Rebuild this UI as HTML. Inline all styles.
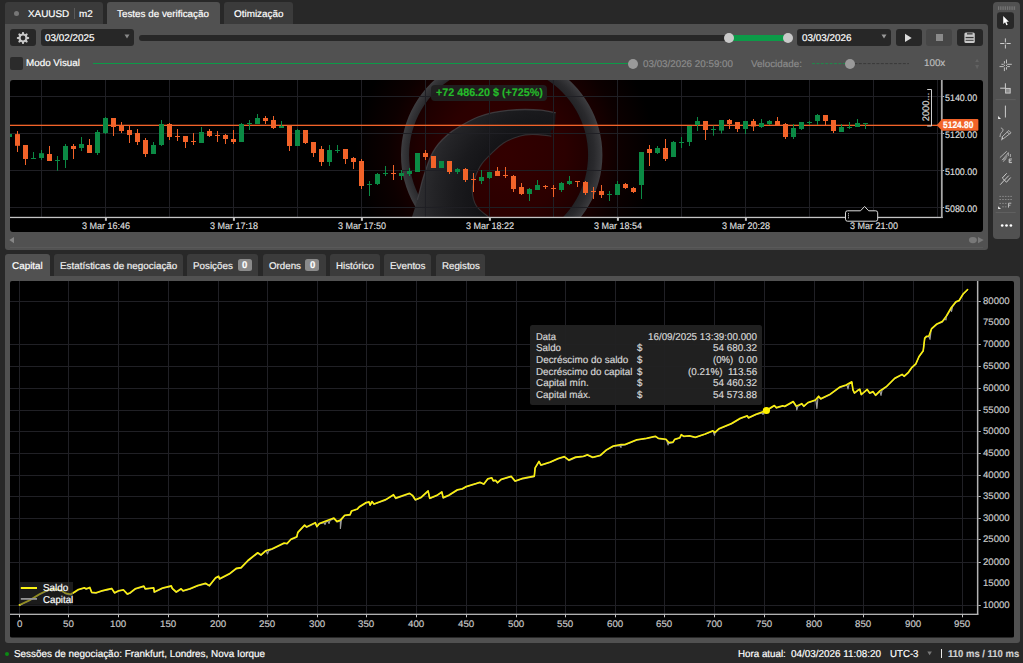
<!DOCTYPE html>
<html><head><meta charset="utf-8"><title>cTrader Backtest</title>
<style>
html,body{margin:0;padding:0;}
body{width:1023px;height:663px;overflow:hidden;background:#282828;font-family:"Liberation Sans",sans-serif;position:relative;}
.b{position:absolute;display:block;}
.t{position:absolute;display:block;white-space:pre;transform-origin:0 50%;text-rendering:geometricPrecision;-webkit-text-stroke:0.18px currentColor;font-family:"Liberation Sans",sans-serif;}
</style></head><body>
<div class="b" style="left:5px;top:2px;width:98px;height:22px;background:#3b3b3b;border-radius:3px 3px 0 0"></div>
<div class="b" style="left:107px;top:2px;width:113px;height:22px;background:#515151;border-radius:3px 3px 0 0"></div>
<div class="b" style="left:224px;top:2px;width:68.5px;height:22px;background:#3b3b3b;border-radius:3px 3px 0 0"></div>
<div class="b" style="left:13.7px;top:10.7px;width:5px;height:5px;background:#777;border-radius:50%"></div>
<span class="t" style="left:27.50px;top:9px;font-size:9.8px;line-height:12.009px;color:#fff;transform:scaleX(1.0106);">XAUUSD</span>
<div class="b" style="left:74.3px;top:8px;width:1px;height:11px;background:#5a5a5a;"></div>
<span class="t" style="left:79.30px;top:9px;font-size:9.8px;line-height:12.009px;color:#fff;transform:scaleX(1.0057);">m2</span>
<span class="t" style="left:116.80px;top:9px;font-size:9.8px;line-height:12.009px;color:#fff;transform:scaleX(1.0051);">Testes de verificação</span>
<span class="t" style="left:234.00px;top:9px;font-size:9.8px;line-height:12.009px;color:#fff;transform:scaleX(1.0102);">Otimização</span>
<div class="b" style="left:5px;top:24px;width:983px;height:225.7px;background:#515151;border-radius:0 3px 3px 3px"></div>
<div class="b" style="left:10px;top:29px;width:26px;height:17px;background:#272727;border-radius:3px"></div>
<div class="b" style="left:41px;top:29px;width:93px;height:17px;background:#272727;border-radius:3px"></div>
<span class="t" style="left:45.00px;top:33px;font-size:9.8px;line-height:12.009px;color:#fff;transform:scaleX(1.0092);">03/02/2025</span>
<svg class="b" style="left:124px;top:34px" width="7" height="6"><path d="M0.5,0.5 L5.5,0.5 L3,4.5Z" fill="#888"/></svg>
<svg class="b" style="left:16px;top:30.6px" width="14" height="14" viewBox="-7 -7 14 14">
<g fill="#c9c9c9"><circle r="4.2"/><path d="M-1.5,-3.6 L-0.7,-6.1 L0.7,-6.1 L1.5,-3.6Z" transform="rotate(0)"/><path d="M-1.5,-3.6 L-0.7,-6.1 L0.7,-6.1 L1.5,-3.6Z" transform="rotate(45)"/><path d="M-1.5,-3.6 L-0.7,-6.1 L0.7,-6.1 L1.5,-3.6Z" transform="rotate(90)"/><path d="M-1.5,-3.6 L-0.7,-6.1 L0.7,-6.1 L1.5,-3.6Z" transform="rotate(135)"/><path d="M-1.5,-3.6 L-0.7,-6.1 L0.7,-6.1 L1.5,-3.6Z" transform="rotate(180)"/><path d="M-1.5,-3.6 L-0.7,-6.1 L0.7,-6.1 L1.5,-3.6Z" transform="rotate(225)"/><path d="M-1.5,-3.6 L-0.7,-6.1 L0.7,-6.1 L1.5,-3.6Z" transform="rotate(270)"/><path d="M-1.5,-3.6 L-0.7,-6.1 L0.7,-6.1 L1.5,-3.6Z" transform="rotate(315)"/></g><circle r="2.4" fill="#272727"/></svg>
<div class="b" style="left:139px;top:35px;width:650px;height:6px;background:#272727;border-radius:3px"></div>
<div class="b" style="left:729px;top:35px;width:59px;height:6px;background:#0c9a48;"></div>
<div class="b" style="left:723.7px;top:32.7px;width:10px;height:10px;background:#c9c9c9;border-radius:50%"></div>
<div class="b" style="left:782.8px;top:32.7px;width:10px;height:10px;background:#c9c9c9;border-radius:50%"></div>
<div class="b" style="left:797px;top:29px;width:94px;height:17px;background:#272727;border-radius:3px"></div>
<span class="t" style="left:802.00px;top:33px;font-size:9.8px;line-height:12.009px;color:#fff;transform:scaleX(1.0092);">03/03/2026</span>
<svg class="b" style="left:881px;top:34px" width="7" height="6"><path d="M0.5,0.5 L5.5,0.5 L3,4.5Z" fill="#999"/></svg>
<div class="b" style="left:896px;top:29px;width:26px;height:17px;background:#272727;border-radius:3px"></div>
<svg class="b" style="left:904px;top:32.5px" width="10" height="10"><path d="M1,0.7 L7.7,4.9 L1,9.1Z" fill="#ddd"/></svg>
<div class="b" style="left:926px;top:29px;width:26px;height:17px;background:#464646;border-radius:3px"></div>
<div class="b" style="left:936px;top:34px;width:7px;height:7px;background:#8a8a8a;"></div>
<div class="b" style="left:957px;top:29px;width:26px;height:17px;background:#272727;border-radius:3px"></div>
<svg class="b" style="left:964px;top:32px" width="12" height="12"><rect x="0.4" y="0.4" width="10.4" height="10.6" rx="1.5" fill="#c9c9c9"/><rect x="3" y="0.9" width="5.6" height="1.7" fill="#555"/><rect x="1.6" y="4.9" width="8" height="1.3" fill="#3a3a3a"/><rect x="1.6" y="7.8" width="8" height="1.1" fill="#4a4a4a"/></svg>
<div class="b" style="left:10px;top:57px;width:12.5px;height:12.5px;background:#2b2b2b;border-radius:2px"></div>
<span class="t" style="left:25.50px;top:58px;font-size:9.8px;line-height:12.009px;color:#fff;transform:scaleX(1.0046);">Modo Visual</span>
<div class="b" style="left:92.5px;top:63.1px;width:538px;height:1px;background:#0c9a48;"></div>
<div class="b" style="left:628.4px;top:59px;width:10px;height:10px;background:#9a9a9a;border-radius:50%"></div>
<span class="t" style="left:643.00px;top:59px;font-size:9.8px;line-height:12.009px;color:#8c8c8c;transform:scaleX(1.0009);">03/03/2026 20:59:00</span>
<span class="t" style="left:750.80px;top:59px;font-size:9.8px;line-height:12.009px;color:#8c8c8c;transform:scaleX(1.0046);">Velocidade:</span>
<svg class="b" style="left:811px;top:62px" width="99" height="3"><line x1="1" y1="1.6" x2="39" y2="1.6" stroke="#1f8a4c" stroke-width="1" stroke-dasharray="3 1.4"/><line x1="39" y1="1.6" x2="98" y2="1.6" stroke="#3a3a3a" stroke-width="1" stroke-dasharray="3 1.4"/></svg>
<div class="b" style="left:845px;top:58.6px;width:10px;height:10px;background:#9a9a9a;border-radius:50%"></div>
<span class="t" style="left:923.90px;top:58px;font-size:9.8px;line-height:12.009px;color:#bdbdbd;transform:scaleX(1.0016);">100x</span>
<svg class="b" style="left:974px;top:57px" width="7" height="14"><path d="M1.2,5.1 L3.1,1.7 L5,5.1Z M1.2,8 L3.1,12.2 L5,8Z" fill="#626262"/></svg>
<svg class="b" style="left:10px;top:80px;border-radius:3px" width="973.3" height="152" viewBox="10 80 973.3 152"><defs><radialGradient id="glow" cx="505" cy="155" r="150" gradientUnits="userSpaceOnUse">
<stop offset="0" stop-color="#330000"/><stop offset="0.4" stop-color="#2b0000"/><stop offset="0.58" stop-color="#1f0000"/><stop offset="0.78" stop-color="#0c0000"/><stop offset="1" stop-color="#000"/></radialGradient>
<radialGradient id="ring" cx="501.7" cy="155" r="100.7" gradientUnits="userSpaceOnUse"><stop offset="0.84" stop-color="#202023"/><stop offset="0.92" stop-color="#2a2a2d"/><stop offset="0.975" stop-color="#363639"/><stop offset="1" stop-color="#3e3e41"/></radialGradient>
<radialGradient id="sw" cx="545" cy="200" r="130" gradientUnits="userSpaceOnUse"><stop offset="0.5" stop-color="#121215"/><stop offset="0.7" stop-color="#1a1a1d"/><stop offset="0.86" stop-color="#242427"/><stop offset="1" stop-color="#2f2f32"/></radialGradient>
<clipPath id="plot"><rect x="10" y="80" width="932" height="137"/></clipPath></defs><rect x="10" y="80" width="973.3" height="152" fill="#000"/><g clip-path="url(#plot)"><rect x="340" y="80" width="330" height="137" fill="url(#glow)"/><path fill-rule="evenodd" d="M501.7,54.3 a100.7,100.7 0 1 0 0.01,0Z M498.6,65.5 a89.5,89.5 0 1 1 -0.01,0Z" fill="url(#ring)"/><path d="M555.7,112.7 C553.2,112.3 546.1,110.7 541.0,110.2 C535.9,109.7 530.8,109.5 525.3,109.5 C519.8,109.5 513.4,109.8 508.0,110.3 C502.6,110.8 497.7,111.6 492.7,112.7 C487.7,113.8 482.3,115.4 478.0,117.0 C473.7,118.6 471.0,120.1 466.7,122.5 C462.4,124.9 456.0,128.6 452.0,131.4 C448.0,134.2 445.2,136.8 442.5,139.5 C439.8,142.2 437.7,144.7 435.7,147.6 C433.7,150.5 432.2,153.2 430.5,157.1 C428.8,160.9 426.9,166.6 425.5,170.7 C424.1,174.8 423.0,178.4 422.1,181.6 C421.2,184.8 420.9,186.6 420.1,189.7 C419.3,192.8 417.8,198.2 417.4,199.9 L412,217 L488.6,217 C486.6,215.2 479.1,210.3 476.4,206.0 C473.7,201.7 472.5,195.8 472.3,191.0 C472.1,186.2 473.5,182.0 475.1,177.5 C476.7,173.0 478.5,168.4 481.8,163.9 C485.1,159.4 491.1,153.9 494.7,150.4 C498.3,146.9 500.4,145.1 503.6,143.0 C506.8,140.9 510.4,139.3 514.0,138.0 C517.6,136.7 521.3,135.5 525.3,134.9 C529.3,134.3 533.6,134.4 538.0,134.6 C542.4,134.8 549.2,135.9 551.4,136.2 L550.6,131 L554.6,128.6 Z" fill="url(#sw)"/><path d="M555.7,112.7 C553.2,112.3 546.1,110.7 541.0,110.2 C535.9,109.7 530.8,109.5 525.3,109.5 C519.8,109.5 513.4,109.8 508.0,110.3 C502.6,110.8 497.7,111.6 492.7,112.7 C487.7,113.8 482.3,115.4 478.0,117.0 C473.7,118.6 471.0,120.1 466.7,122.5 C462.4,124.9 456.0,128.6 452.0,131.4 C448.0,134.2 445.2,136.8 442.5,139.5 C439.8,142.2 437.7,144.7 435.7,147.6 C433.7,150.5 432.2,153.2 430.5,157.1 C428.8,160.9 426.9,166.6 425.5,170.7 C424.1,174.8 423.0,178.4 422.1,181.6 C421.2,184.8 420.9,186.6 420.1,189.7 C419.3,192.8 417.8,198.2 417.4,199.9" fill="none" stroke="#444447" stroke-width="1.3" opacity="0.8"/><path d="M488.6,217 C486.6,215.2 479.1,210.3 476.4,206.0 C473.7,201.7 472.5,195.8 472.3,191.0 C472.1,186.2 473.5,182.0 475.1,177.5 C476.7,173.0 478.5,168.4 481.8,163.9 C485.1,159.4 491.1,153.9 494.7,150.4 C498.3,146.9 500.4,145.1 503.6,143.0 C506.8,140.9 510.4,139.3 514.0,138.0 C517.6,136.7 521.3,135.5 525.3,134.9 C529.3,134.3 533.6,134.4 538.0,134.6 C542.4,134.8 549.2,135.9 551.4,136.2" fill="none" stroke="#38383b" stroke-width="1.1" opacity="0.8"/></g><path d="M41.5,80V217 M105.5,80V217 M169.5,80V217 M233.5,80V217 M297.5,80V217 M361.5,80V217 M425.5,80V217 M489.5,80V217 M553.5,80V217 M617.5,80V217 M681.5,80V217 M745.5,80V217 M809.5,80V217 M873.5,80V217 M937.5,80V217 M10,96.5H942 M10,133.5H942 M10,170.5H942 M10,207.5H942" stroke="#202025" stroke-width="1" fill="none"/><rect x="10" y="124.7" width="932" height="1.3" fill="#f26329"/><rect x="9.0" y="134" width="1" height="3" fill="#0b8a44"/><rect x="7.0" y="134" width="5" height="3" fill="#0b8a44"/><rect x="17.0" y="131" width="1" height="21" fill="#f26329"/><rect x="15.0" y="134.1" width="5" height="11.700000000000017" fill="#f26329"/><rect x="25.0" y="145" width="1" height="20" fill="#f26329"/><rect x="23.0" y="145" width="5" height="14" fill="#f26329"/><rect x="33.0" y="152" width="1" height="7" fill="#0b8a44"/><rect x="31.0" y="158" width="5" height="1" fill="#0b8a44"/><rect x="41.0" y="150" width="1" height="10" fill="#0b8a44"/><rect x="39.0" y="153.2" width="5" height="4.800000000000011" fill="#0b8a44"/><rect x="49.0" y="146" width="1" height="15" fill="#f26329"/><rect x="47.0" y="154" width="5" height="7" fill="#f26329"/><rect x="57.0" y="156" width="1" height="14.699999999999989" fill="#0b8a44"/><rect x="55.0" y="160" width="5" height="1" fill="#0b8a44"/><rect x="65.0" y="144" width="1" height="24" fill="#0b8a44"/><rect x="63.0" y="146" width="5" height="14" fill="#0b8a44"/><rect x="73.0" y="144" width="1" height="15" fill="#f26329"/><rect x="71.0" y="146" width="5" height="3" fill="#f26329"/><rect x="81.0" y="137" width="1" height="14" fill="#0b8a44"/><rect x="79.0" y="144" width="5" height="4" fill="#0b8a44"/><rect x="89.0" y="139" width="1" height="14" fill="#f26329"/><rect x="87.0" y="145" width="5" height="8" fill="#f26329"/><rect x="97.0" y="130" width="1" height="25" fill="#0b8a44"/><rect x="95.0" y="132" width="5" height="21" fill="#0b8a44"/><rect x="105.0" y="117" width="1" height="17" fill="#0b8a44"/><rect x="103.0" y="118" width="5" height="15" fill="#0b8a44"/><rect x="113.0" y="118" width="1" height="18" fill="#f26329"/><rect x="111.0" y="118" width="5" height="9" fill="#f26329"/><rect x="121.0" y="122" width="1" height="11" fill="#f26329"/><rect x="119.0" y="126" width="5" height="5" fill="#f26329"/><rect x="129.0" y="126" width="1" height="17" fill="#f26329"/><rect x="127.0" y="130" width="5" height="5" fill="#f26329"/><rect x="137.0" y="129" width="1" height="16" fill="#f26329"/><rect x="135.0" y="133" width="5" height="9" fill="#f26329"/><rect x="145.0" y="138" width="1" height="19" fill="#f26329"/><rect x="143.0" y="140" width="5" height="14" fill="#f26329"/><rect x="153.0" y="142" width="1" height="12" fill="#0b8a44"/><rect x="151.0" y="145" width="5" height="9" fill="#0b8a44"/><rect x="161.0" y="120" width="1" height="26" fill="#0b8a44"/><rect x="159.0" y="124" width="5" height="21" fill="#0b8a44"/><rect x="169.0" y="123" width="1" height="17" fill="#f26329"/><rect x="167.0" y="124" width="5" height="13" fill="#f26329"/><rect x="177.0" y="129" width="1" height="12" fill="#f26329"/><rect x="175.0" y="136" width="5" height="1" fill="#f26329"/><rect x="185.0" y="136" width="1" height="12" fill="#f26329"/><rect x="183.0" y="136" width="5" height="6" fill="#f26329"/><rect x="193.0" y="133" width="1" height="12" fill="#f26329"/><rect x="191.0" y="141" width="5" height="1" fill="#f26329"/><rect x="201.0" y="127" width="1" height="16" fill="#0b8a44"/><rect x="199.0" y="132" width="5" height="11" fill="#0b8a44"/><rect x="209.0" y="129" width="1" height="8" fill="#f26329"/><rect x="207.0" y="131" width="5" height="5" fill="#f26329"/><rect x="217.0" y="131" width="1" height="11" fill="#f26329"/><rect x="215.0" y="135" width="5" height="1" fill="#f26329"/><rect x="225.0" y="134" width="1" height="10" fill="#f26329"/><rect x="223.0" y="135" width="5" height="4" fill="#f26329"/><rect x="233.0" y="130" width="1" height="14" fill="#f26329"/><rect x="231.0" y="139" width="5" height="3" fill="#f26329"/><rect x="241.0" y="123" width="1" height="19" fill="#0b8a44"/><rect x="239.0" y="124" width="5" height="18" fill="#0b8a44"/><rect x="249.0" y="120" width="1" height="10" fill="#0b8a44"/><rect x="247.0" y="123" width="5" height="1" fill="#0b8a44"/><rect x="257.0" y="114" width="1" height="10" fill="#0b8a44"/><rect x="255.0" y="118" width="5" height="6" fill="#0b8a44"/><rect x="265.0" y="116" width="1" height="8" fill="#f26329"/><rect x="263.0" y="118" width="5" height="3" fill="#f26329"/><rect x="273.0" y="116" width="1" height="13" fill="#f26329"/><rect x="271.0" y="120" width="5" height="8" fill="#f26329"/><rect x="281.0" y="121" width="1" height="7" fill="#0b8a44"/><rect x="279.0" y="126" width="5" height="2" fill="#0b8a44"/><rect x="289.0" y="125.4" width="1" height="25.599999999999994" fill="#f26329"/><rect x="287.0" y="125.4" width="5" height="20.599999999999994" fill="#f26329"/><rect x="297.0" y="129" width="1" height="17" fill="#0b8a44"/><rect x="295.0" y="130" width="5" height="16" fill="#0b8a44"/><rect x="305.0" y="130" width="1" height="14" fill="#f26329"/><rect x="303.0" y="130" width="5" height="13" fill="#f26329"/><rect x="313.0" y="142" width="1" height="15" fill="#f26329"/><rect x="311.0" y="142" width="5" height="11" fill="#f26329"/><rect x="321.0" y="146" width="1" height="20" fill="#f26329"/><rect x="319.0" y="149" width="5" height="13" fill="#f26329"/><rect x="329.0" y="145" width="1" height="21" fill="#0b8a44"/><rect x="327.0" y="150" width="5" height="12" fill="#0b8a44"/><rect x="337.0" y="145" width="1" height="8" fill="#0b8a44"/><rect x="335.0" y="150" width="5" height="1" fill="#0b8a44"/><rect x="345.0" y="149" width="1" height="15" fill="#f26329"/><rect x="343.0" y="149" width="5" height="10" fill="#f26329"/><rect x="353.0" y="157" width="1" height="12" fill="#f26329"/><rect x="351.0" y="158" width="5" height="4" fill="#f26329"/><rect x="361.0" y="159" width="1" height="30" fill="#f26329"/><rect x="359.0" y="161" width="5" height="25" fill="#f26329"/><rect x="369.0" y="181" width="1" height="15" fill="#0b8a44"/><rect x="367.0" y="184" width="5" height="1" fill="#0b8a44"/><rect x="377.0" y="173" width="1" height="12" fill="#0b8a44"/><rect x="375.0" y="174" width="5" height="10" fill="#0b8a44"/><rect x="385.0" y="166" width="1" height="10" fill="#0b8a44"/><rect x="383.0" y="173" width="5" height="1" fill="#0b8a44"/><rect x="393.0" y="165" width="1" height="15" fill="#f26329"/><rect x="391.0" y="173" width="5" height="1" fill="#f26329"/><rect x="401.0" y="170" width="1" height="10" fill="#0b8a44"/><rect x="399.0" y="173" width="5" height="3" fill="#0b8a44"/><rect x="409.0" y="168" width="1" height="8" fill="#0b8a44"/><rect x="407.0" y="171" width="5" height="3" fill="#0b8a44"/><rect x="417.0" y="153" width="1" height="19" fill="#0b8a44"/><rect x="415.0" y="153" width="5" height="19" fill="#0b8a44"/><rect x="425.0" y="150" width="1" height="10" fill="#f26329"/><rect x="423.0" y="153" width="5" height="4" fill="#f26329"/><rect x="433.0" y="156" width="1" height="12" fill="#f26329"/><rect x="431.0" y="156" width="5" height="12" fill="#f26329"/><rect x="441.0" y="161" width="1" height="7" fill="#0b8a44"/><rect x="439.0" y="161" width="5" height="7" fill="#0b8a44"/><rect x="449.0" y="161" width="1" height="13" fill="#f26329"/><rect x="447.0" y="161" width="5" height="11" fill="#f26329"/><rect x="457.0" y="168" width="1" height="6" fill="#0b8a44"/><rect x="455.0" y="169" width="5" height="3" fill="#0b8a44"/><rect x="465.0" y="168" width="1" height="14" fill="#f26329"/><rect x="463.0" y="169" width="5" height="11" fill="#f26329"/><rect x="473.0" y="173" width="1" height="19" fill="#f26329"/><rect x="471.0" y="179" width="5" height="1" fill="#f26329"/><rect x="481.0" y="170" width="1" height="14" fill="#0b8a44"/><rect x="479.0" y="177" width="5" height="4" fill="#0b8a44"/><rect x="489.0" y="172" width="1" height="7" fill="#0b8a44"/><rect x="487.0" y="172" width="5" height="6" fill="#0b8a44"/><rect x="497.0" y="167" width="1" height="9" fill="#f26329"/><rect x="495.0" y="171" width="5" height="5" fill="#f26329"/><rect x="505.0" y="167" width="1" height="11" fill="#f26329"/><rect x="503.0" y="175" width="5" height="1" fill="#f26329"/><rect x="513.0" y="175" width="1" height="17" fill="#f26329"/><rect x="511.0" y="176" width="5" height="13" fill="#f26329"/><rect x="521.0" y="183" width="1" height="12" fill="#f26329"/><rect x="519.0" y="187" width="5" height="7" fill="#f26329"/><rect x="529.0" y="188" width="1" height="13" fill="#0b8a44"/><rect x="527.0" y="189" width="5" height="5" fill="#0b8a44"/><rect x="537.0" y="180" width="1" height="10" fill="#0b8a44"/><rect x="535.0" y="185" width="5" height="5" fill="#0b8a44"/><rect x="545.0" y="185" width="1" height="4" fill="#f26329"/><rect x="543.0" y="186" width="5" height="1" fill="#f26329"/><rect x="553.0" y="185" width="1" height="12" fill="#f26329"/><rect x="551.0" y="188" width="5" height="1" fill="#f26329"/><rect x="561.0" y="182" width="1" height="10" fill="#0b8a44"/><rect x="559.0" y="183" width="5" height="7" fill="#0b8a44"/><rect x="569.0" y="176" width="1" height="9" fill="#0b8a44"/><rect x="567.0" y="181" width="5" height="3" fill="#0b8a44"/><rect x="577.0" y="181" width="1" height="6" fill="#f26329"/><rect x="575.0" y="181" width="5" height="1" fill="#f26329"/><rect x="585.0" y="181" width="1" height="14" fill="#f26329"/><rect x="583.0" y="182" width="5" height="11" fill="#f26329"/><rect x="593.0" y="187" width="1" height="12" fill="#f26329"/><rect x="591.0" y="191" width="5" height="1" fill="#f26329"/><rect x="601.0" y="185" width="1" height="13" fill="#f26329"/><rect x="599.0" y="191" width="5" height="4" fill="#f26329"/><rect x="609.0" y="191" width="1" height="10" fill="#0b8a44"/><rect x="607.0" y="194" width="5" height="1" fill="#0b8a44"/><rect x="617.0" y="181" width="1" height="14" fill="#0b8a44"/><rect x="615.0" y="184" width="5" height="11" fill="#0b8a44"/><rect x="625.0" y="183" width="1" height="6" fill="#f26329"/><rect x="623.0" y="184" width="5" height="4" fill="#f26329"/><rect x="633.0" y="187" width="1" height="6" fill="#f26329"/><rect x="631.0" y="188" width="5" height="4" fill="#f26329"/><rect x="641.0" y="152" width="1" height="47" fill="#0b8a44"/><rect x="639.0" y="152" width="5" height="33" fill="#0b8a44"/><rect x="649.0" y="145" width="1" height="21" fill="#f26329"/><rect x="647.0" y="149" width="5" height="4" fill="#f26329"/><rect x="657.0" y="146" width="1" height="8" fill="#0b8a44"/><rect x="655.0" y="148" width="5" height="5" fill="#0b8a44"/><rect x="665.0" y="139" width="1" height="22" fill="#f26329"/><rect x="663.0" y="148" width="5" height="11" fill="#f26329"/><rect x="673.0" y="141" width="1" height="16" fill="#0b8a44"/><rect x="671.0" y="142" width="5" height="15" fill="#0b8a44"/><rect x="681.0" y="137" width="1" height="11" fill="#0b8a44"/><rect x="679.0" y="142" width="5" height="1" fill="#0b8a44"/><rect x="689.0" y="126" width="1" height="20" fill="#0b8a44"/><rect x="687.0" y="126" width="5" height="16" fill="#0b8a44"/><rect x="697.0" y="117" width="1" height="14" fill="#0b8a44"/><rect x="695.0" y="121" width="5" height="4" fill="#0b8a44"/><rect x="705.0" y="121" width="1" height="19" fill="#f26329"/><rect x="703.0" y="121" width="5" height="9" fill="#f26329"/><rect x="713.0" y="125.7" width="1" height="9.999999999999986" fill="#0b8a44"/><rect x="711.0" y="129" width="5" height="1" fill="#0b8a44"/><rect x="721.0" y="120" width="1" height="13.5" fill="#0b8a44"/><rect x="719.0" y="120" width="5" height="10.599999999999994" fill="#0b8a44"/><rect x="729.0" y="119" width="1" height="10" fill="#f26329"/><rect x="727.0" y="120" width="5" height="4" fill="#f26329"/><rect x="737.0" y="122" width="1" height="10" fill="#f26329"/><rect x="735.0" y="122" width="5" height="7" fill="#f26329"/><rect x="745.0" y="121" width="1" height="13" fill="#0b8a44"/><rect x="743.0" y="121" width="5" height="8" fill="#0b8a44"/><rect x="753.0" y="119" width="1" height="12" fill="#f26329"/><rect x="751.0" y="121" width="5" height="5.5" fill="#f26329"/><rect x="761.0" y="119" width="1" height="9" fill="#0b8a44"/><rect x="759.0" y="123" width="5" height="4" fill="#0b8a44"/><rect x="769.0" y="120" width="1" height="5" fill="#0b8a44"/><rect x="767.0" y="121" width="5" height="3" fill="#0b8a44"/><rect x="777.0" y="117" width="1" height="9" fill="#f26329"/><rect x="775.0" y="121" width="5" height="5" fill="#f26329"/><rect x="785.0" y="123" width="1" height="16" fill="#f26329"/><rect x="783.0" y="124" width="5" height="13" fill="#f26329"/><rect x="793.0" y="124" width="1" height="15" fill="#0b8a44"/><rect x="791.0" y="128" width="5" height="9" fill="#0b8a44"/><rect x="801.0" y="122" width="1" height="8" fill="#0b8a44"/><rect x="799.0" y="122" width="5" height="7" fill="#0b8a44"/><rect x="809.0" y="121" width="1" height="4" fill="#0b8a44"/><rect x="807.0" y="122" width="5" height="1" fill="#0b8a44"/><rect x="817.0" y="114" width="1" height="11" fill="#0b8a44"/><rect x="815.0" y="115" width="5" height="6" fill="#0b8a44"/><rect x="825.0" y="115" width="1" height="10" fill="#f26329"/><rect x="823.0" y="115" width="5" height="6" fill="#f26329"/><rect x="833.0" y="120" width="1" height="13" fill="#f26329"/><rect x="831.0" y="120" width="5" height="11" fill="#f26329"/><rect x="841.0" y="124" width="1" height="8" fill="#0b8a44"/><rect x="839.0" y="127" width="5" height="5" fill="#0b8a44"/><rect x="849.0" y="122" width="1" height="7" fill="#0b8a44"/><rect x="847.0" y="127" width="5" height="1" fill="#0b8a44"/><rect x="857.0" y="119" width="1" height="8" fill="#0b8a44"/><rect x="855.0" y="123" width="5" height="4" fill="#0b8a44"/><rect x="865.0" y="123" width="1" height="6" fill="#0b8a44"/><rect x="863.0" y="123" width="5" height="1" fill="#0b8a44"/><rect x="10" y="216.8" width="932.7" height="1.3" fill="#c4c4c4"/><rect x="940.9" y="80" width="1.8" height="138" fill="#a8a8a8"/><rect x="104.9" y="217" width="2" height="3.8" fill="#c4c4c4"/><rect x="232.9" y="217" width="2" height="3.8" fill="#c4c4c4"/><rect x="360.9" y="217" width="2" height="3.8" fill="#c4c4c4"/><rect x="488.9" y="217" width="2" height="3.8" fill="#c4c4c4"/><rect x="616.9" y="217" width="2" height="3.8" fill="#c4c4c4"/><rect x="744.9" y="217" width="2" height="3.8" fill="#c4c4c4"/><rect x="872.9" y="217" width="2" height="3.8" fill="#c4c4c4"/><rect x="942.5" y="96.0" width="1.7" height="1" fill="#b0b0b0"/><rect x="942.5" y="133.0" width="1.7" height="1" fill="#b0b0b0"/><rect x="942.5" y="170.0" width="1.7" height="1" fill="#b0b0b0"/><rect x="942.5" y="207.0" width="1.7" height="1" fill="#b0b0b0"/><path d="M927.2,89.5 H931.5 V126 H927.2" stroke="#d0d0d0" stroke-width="1" fill="none"/><path d="M936.8,125.2 L942,119 H977.4 a1,1 0 0 1 1,1 V129.8 a1,1 0 0 1 -1,1 H942 Z" fill="#f26329"/><path d="M847.5,210.8 H860.5 L864.6,206.5 L868.7,210.8 H875.7 a2,2 0 0 1 2,2 V219.2 a2,2 0 0 1 -2,2 H847.5 a2,2 0 0 1 -2,-2 V212.8 a2,2 0 0 1 2,-2Z" fill="#000" stroke="#ddd" stroke-width="1"/><rect x="848" y="213.3" width="1" height="1" fill="#ddd"/><rect x="848" y="215.3" width="1" height="1" fill="#ddd"/><rect x="848" y="217.3" width="1" height="1" fill="#ddd"/></svg>
<span class="t" style="left:945.10px;top:93px;font-size:9.5px;line-height:12.216px;color:#dcdcdc;transform:scaleX(0.9376);">5140.00</span>
<span class="t" style="left:945.10px;top:130px;font-size:9.5px;line-height:12.216px;color:#dcdcdc;transform:scaleX(0.9376);">5120.00</span>
<span class="t" style="left:945.10px;top:167px;font-size:9.5px;line-height:12.216px;color:#dcdcdc;transform:scaleX(0.9376);">5100.00</span>
<span class="t" style="left:945.10px;top:204px;font-size:9.5px;line-height:12.216px;color:#dcdcdc;transform:scaleX(0.9376);">5080.00</span>
<span class="t" style="left:942.80px;top:120px;font-size:9.5px;line-height:12.216px;color:#fff;font-weight:bold;transform:scaleX(0.8881);">5124.80</span>
<span class="t" style="left:81.95px;top:221px;font-size:9.5px;line-height:12.216px;color:#dcdcdc;transform:scaleX(0.9490);">3 Mar 16:46</span>
<span class="t" style="left:209.95px;top:221px;font-size:9.5px;line-height:12.216px;color:#dcdcdc;transform:scaleX(0.9490);">3 Mar 17:18</span>
<span class="t" style="left:337.95px;top:221px;font-size:9.5px;line-height:12.216px;color:#dcdcdc;transform:scaleX(0.9490);">3 Mar 17:50</span>
<span class="t" style="left:465.95px;top:221px;font-size:9.5px;line-height:12.216px;color:#dcdcdc;transform:scaleX(0.9490);">3 Mar 18:22</span>
<span class="t" style="left:593.95px;top:221px;font-size:9.5px;line-height:12.216px;color:#dcdcdc;transform:scaleX(0.9490);">3 Mar 18:54</span>
<span class="t" style="left:721.95px;top:221px;font-size:9.5px;line-height:12.216px;color:#dcdcdc;transform:scaleX(0.9490);">3 Mar 20:28</span>
<span class="t" style="left:849.95px;top:221px;font-size:9.5px;line-height:12.216px;color:#dcdcdc;transform:scaleX(0.9490);">3 Mar 21:00</span>
<div class="b" style="left:431px;top:84.6px;width:116px;height:16px;background:rgba(32,32,32,0.93);border-radius:4px"></div>
<span class="t" style="left:436.20px;top:87px;font-size:11px;line-height:13.177px;color:#25bb2a;font-weight:bold;transform:scaleX(0.9758);">+72 486.20 $ (+725%)</span>
<span class="t" style="left:926.8px;top:107.3px;font-size:9.5px;line-height:12px;color:#ddd;transform:translate(-50%,-50%) rotate(-90deg) scaleX(0.98);transform-origin:50% 50%;">2000...</span>
<svg class="b" style="left:9px;top:236px" width="8" height="9"><path d="M5,0.9 L0.3,4.1 L5,7.3Z" fill="#868686"/></svg>
<div class="b" style="left:10px;top:247px;width:973px;height:1px;background:#595959;"></div>
<svg class="b" style="left:968px;top:236px" width="17" height="9"><ellipse cx="4.9" cy="4.1" rx="4" ry="3.1" fill="#787878"/><path d="M10,1 L15.7,4.1 L10,7.2Z" fill="#787878"/></svg>
<div class="b" style="left:993px;top:2.3px;width:27px;height:236.7px;background:#515151;border-radius:4px"></div>
<svg class="b" style="left:993px;top:2px" width="27" height="237" viewBox="993 2 27 237"><rect x="998.0" y="6.3" width="0.9" height="3.6" fill="#7a7a7a"/><rect x="999.8" y="6.3" width="0.9" height="3.6" fill="#7a7a7a"/><rect x="1001.6" y="6.3" width="0.9" height="3.6" fill="#7a7a7a"/><rect x="1003.4" y="6.3" width="0.9" height="3.6" fill="#7a7a7a"/><rect x="1005.2" y="6.3" width="0.9" height="3.6" fill="#7a7a7a"/><rect x="1007.0" y="6.3" width="0.9" height="3.6" fill="#7a7a7a"/><rect x="1008.8" y="6.3" width="0.9" height="3.6" fill="#7a7a7a"/><rect x="1010.6" y="6.3" width="0.9" height="3.6" fill="#7a7a7a"/><rect x="1012.4" y="6.3" width="0.9" height="3.6" fill="#7a7a7a"/><rect x="1014.2" y="6.3" width="0.9" height="3.6" fill="#7a7a7a"/><rect x="997" y="12.2" width="17" height="16.8" rx="3" fill="#272727"/><path d="M1003.2,15.9 L1003.2,24 L1005.1,22.3 L1006.4,25.3 L1007.7,24.7 L1006.4,21.8 L1008.9,21.7Z" fill="#fff"/><path d="M1005.4,38.4V42.4M1005.4,44.6V48.5M1000.2,43.5H1004.4M1006.5,43.5H1010.7" stroke="#cdcdcd" stroke-width="1"/><rect x="1005" y="43.1" width="0.8" height="0.8" fill="#aaa"/><path d="M1004.4,61.1V63.6M1004.4,67.4V71.1M1006.5,59.5V63.4M1006.5,67.2V69.6M1001.4,64.3H1003.7M1007.2,64.3H1011.8M999.5,66.6H1003.7M1007.2,66.6H1009.9M1004.4,64.8V66M1006.5,64.8V66" stroke="#cdcdcd" stroke-width="0.9"/><path d="M1005.4,83.3V88.5M1000.2,88.2H1005.4" stroke="#cdcdcd" stroke-width="1"/><rect x="1005.6" y="88.4" width="4.6" height="4.7" fill="#8c8c8c" stroke="#cdcdcd" stroke-width="0.9"/><rect x="995.6" y="99.1" width="20.1" height="1" fill="#5f5f5f"/><path d="M1005.4,105.6V117.5" stroke="#cdcdcd" stroke-width="1"/><path d="M998.1,116V118.9H1001Z" fill="#f0f0f0"/><path d="M1008.8,130.5 L1011,132.8 L1003.5,138.6 L1001.9,137.1 Z M1007.2,131.8 L1009.4,134.1" stroke="#cdcdcd" stroke-width="0.8" fill="none"/><path d="M1001.9,137.1 L1003.5,138.6 L1001.2,140.7Z" fill="#cdcdcd"/><path d="M1000.9,128c1.2,0.3 2.2,1 2.1,2.2c-0.2,1.6 -2.4,2.6 -2.6,4.3c-0.1,1 -0.3,1.6 -0.5,2.5" stroke="#cdcdcd" stroke-width="0.8" fill="none"/><path d="M999.9,157.6L1006.7,151.3M1002,160.2L1008.3,152.9M1003.2,161.7L1006,158.6" stroke="#bdbdbd" stroke-width="0.9"/><path d="M1008.3,152.3V156M1010.4,154V157" stroke="#bdbdbd" stroke-width="0.8"/><path d="M1002.6,159.8L1006.5,155.4L1007.6,156.5L1004.4,161.2Z" fill="#8a8a8a"/><path d="M1011.9,159H1009.2V162.6H1011.9M1009.2,160.8H1011.4" stroke="#d4d4d4" stroke-width="0.9" fill="none"/><path d="M1000.2,184.7L1004.4,180.1M1002.3,178L1006.5,182.2M1002.3,178L1006.7,173.3M1004.4,180.1L1008.8,175.6M1006.5,182.2L1010.7,177.5" stroke="#cdcdcd" stroke-width="1" fill="none"/><rect x="999.4" y="195.9" width="1.6" height="0.9" fill="#8e8e8e"/><rect x="999.4" y="199.0" width="1.6" height="0.9" fill="#8e8e8e"/><rect x="999.4" y="202.9" width="1.6" height="0.9" fill="#8e8e8e"/><rect x="1002.2" y="195.9" width="1.6" height="0.9" fill="#8e8e8e"/><rect x="1002.2" y="199.0" width="1.6" height="0.9" fill="#8e8e8e"/><rect x="1002.2" y="202.9" width="1.6" height="0.9" fill="#8e8e8e"/><rect x="1002.2" y="206.4" width="1.6" height="0.9" fill="#8e8e8e"/><rect x="1004.9" y="195.9" width="1.6" height="0.9" fill="#8e8e8e"/><rect x="1004.9" y="199.0" width="1.6" height="0.9" fill="#8e8e8e"/><rect x="1004.9" y="202.9" width="1.6" height="0.9" fill="#8e8e8e"/><rect x="1004.9" y="206.4" width="1.6" height="0.9" fill="#8e8e8e"/><rect x="1007.7" y="195.9" width="1.6" height="0.9" fill="#8e8e8e"/><rect x="1007.7" y="199.0" width="1.6" height="0.9" fill="#8e8e8e"/><rect x="1010.3" y="195.9" width="1.6" height="0.9" fill="#8e8e8e"/><rect x="1010.3" y="199.0" width="1.6" height="0.9" fill="#8e8e8e"/><path d="M1008.5,207.6V203.2H1011.3M1008.5,205.2H1010.4" stroke="#b8b8b8" stroke-width="1" fill="none"/><path d="M998.1,206.2V209.1H1001Z" fill="#f0f0f0"/><rect x="995.6" y="212" width="20.1" height="1" fill="#5f5f5f"/><circle cx="1002.2" cy="225.5" r="1.35" fill="#fff"/><circle cx="1006.5" cy="225.5" r="1.35" fill="#fff"/><circle cx="1010.9" cy="225.5" r="1.35" fill="#fff"/></svg>
<div class="b" style="left:5px;top:254px;width:45px;height:22px;background:#515151;border-radius:3px 3px 0 0"></div>
<div class="b" style="left:54px;top:254px;width:129px;height:22px;background:#3b3b3b;border-radius:3px 3px 0 0"></div>
<div class="b" style="left:187.3px;top:254px;width:70.5px;height:22px;background:#3b3b3b;border-radius:3px 3px 0 0"></div>
<div class="b" style="left:263.4px;top:254px;width:62.5px;height:22px;background:#3b3b3b;border-radius:3px 3px 0 0"></div>
<div class="b" style="left:330.2px;top:254px;width:49.60000000000002px;height:22px;background:#3b3b3b;border-radius:3px 3px 0 0"></div>
<div class="b" style="left:384.1px;top:254px;width:46.5px;height:22px;background:#3b3b3b;border-radius:3px 3px 0 0"></div>
<div class="b" style="left:435.7px;top:254px;width:49.0px;height:22px;background:#3b3b3b;border-radius:3px 3px 0 0"></div>
<span class="t" style="left:11.80px;top:261px;font-size:9.8px;line-height:12.009px;color:#fff;transform:scaleX(1.0089);">Capital</span>
<span class="t" style="left:59.70px;top:261px;font-size:9.8px;line-height:12.009px;color:#f0f0f0;transform:scaleX(1.0063);">Estatísticas de negociação</span>
<span class="t" style="left:192.60px;top:261px;font-size:9.8px;line-height:12.009px;color:#f0f0f0;transform:scaleX(1.0028);">Posições</span>
<div class="b" style="left:237.6px;top:258.7px;width:14px;height:12.2px;background:#8a8a8a;border-radius:2.5px"></div>
<span class="t" style="left:242.00px;top:260px;font-size:9.8px;line-height:12.009px;color:#fff;font-weight:bold;transform:scaleX(0.9744);">0</span>
<span class="t" style="left:268.50px;top:261px;font-size:9.8px;line-height:12.009px;color:#f0f0f0;transform:scaleX(0.9955);">Ordens</span>
<div class="b" style="left:305.3px;top:258.7px;width:14px;height:12.2px;background:#8a8a8a;border-radius:2.5px"></div>
<span class="t" style="left:309.70px;top:260px;font-size:9.8px;line-height:12.009px;color:#fff;font-weight:bold;transform:scaleX(0.9744);">0</span>
<span class="t" style="left:336.00px;top:261px;font-size:9.8px;line-height:12.009px;color:#f0f0f0;transform:scaleX(0.9942);">Histórico</span>
<span class="t" style="left:390.00px;top:261px;font-size:9.8px;line-height:12.009px;color:#f0f0f0;transform:scaleX(1.0021);">Eventos</span>
<span class="t" style="left:441.50px;top:261px;font-size:9.8px;line-height:12.009px;color:#f0f0f0;transform:scaleX(0.9942);">Registos</span>
<div class="b" style="left:5px;top:276px;width:1014.5px;height:367px;background:#515151;border-radius:0 3px 3px 3px"></div>
<svg class="b" style="left:10px;top:281px;border-radius:2px" width="1004" height="356.5" viewBox="10 281 1004 356.5"><rect x="10" y="281" width="1004" height="356.5" fill="#000"/><path d="M19.5,281V614 M68.5,281V614 M118.5,281V614 M168.5,281V614 M218.5,281V614 M267.5,281V614 M317.5,281V614 M366.5,281V614 M416.5,281V614 M466.5,281V614 M516.5,281V614 M565.5,281V614 M615.5,281V614 M664.5,281V614 M714.5,281V614 M764.5,281V614 M814.5,281V614 M863.5,281V614 M913.5,281V614 M962.5,281V614 M10,301.5H977.5 M10,344.5H977.5 M10,366.5H977.5 M10,388.5H977.5 M10,410.5H977.5 M10,431.5H977.5 M10,453.5H977.5 M10,475.5H977.5 M10,496.5H977.5 M10,518.5H977.5 M10,539.5H977.5 M10,562.5H977.5 M10,605.5H977.5" stroke="#202025" stroke-width="1" fill="none"/><polyline points="19.4,605.5 29.5,600.7 39.3,594.8 47.1,590.9 54.0,589.2 61.8,591.2 65.7,593.8 70.6,594.8 74.5,592.5 78.4,589.9 84.3,588.2 86.2,589.2 89.8,587.9 91.7,592.8 96.0,593.2 101.9,591.2 107.8,589.9 111.7,588.9 114.6,593.2 118.5,591.2 123.4,590.2 127.3,594.4 130.2,593.2 135.1,589.2 143.9,586.6 145.3,589.2 153.7,588.2 154.3,592.4 162.5,588.5 171.3,586.4 172.3,588.9 176.2,592.4 181.1,589.2 183.0,591.2 189.9,589.2 197.7,586.0 205.5,583.8 209.4,586.1 215.6,578.2 218.6,576.7 219.6,579.2 229.3,574.2 236.2,568.9 241.1,568.1 247.9,561.0 257.7,553.2 261.0,555.4 265.5,551.2 266.5,551.5 267.5,554.0 268.5,550.9 272.3,549.2 284.1,543.5 287.0,544.0 290.9,539.7 296.8,537.2 297.8,532.9 304.6,525.5 306.5,527.4 315.3,523.1 316.9,527.0 319.3,523.9 324.0,522.6 325.0,524.5 326.0,521.9 328.0,521.2 329.0,523.5 330.0,520.5 333.9,518.6 336.9,521.9 339.4,521.4 340.4,520.6 340.4,528.5 341.4,519.9 344.7,515.7 350.1,515.1 351.5,511.3 357.4,509.3 359.3,507.2 366.2,502.9 369.1,502.3 370.1,505.4 372.0,501.9 374.0,504.3 385.7,500.1 393.5,495.1 395.7,498.6 409.6,493.8 412.5,495.8 415.4,500.2 421.3,497.6 428.1,491.2 429.7,498.6 436.9,495.8 441.8,492.2 443.2,498.1 448.7,495.8 457.4,490.2 462.3,489.2 466.2,486.9 476.0,483.9 479.9,482.6 483.8,484.3 487.8,479.1 491.7,478.1 493.2,481.1 495.6,480.6 497.5,483.1 501.4,479.6 511.2,476.8 515.1,481.4 522.9,478.8 534.3,476.6 535.1,468.3 539.0,461.8 540.9,465.4 550.3,462.4 558.1,458.9 564.4,457.1 568.9,460.6 575.7,457.6 583.5,456.6 587.4,455.1 592.7,457.6 600.5,455.6 606.4,450.3 613.2,446.4 620.0,445.7 621.0,447.4 621.1,444.9 622.0,445.4 625.0,444.9 636.7,440.2 646.5,438.6 655.3,436.6 658.2,438.6 666.0,439.6 667.0,441.3 668.0,444.9 668.9,442.9 669.0,443.4 672.9,442.6 674.8,439.6 679.7,438.2 681.3,435.1 683.6,436.6 689.5,436.1 695.3,437.6 705.1,434.3 712.9,431.2 713.5,432.2 714.5,435.4 714.9,432.8 715.5,432.7 718.8,429.2 731.5,423.9 740.3,418.8 747.2,416.1 748.5,418.1 756.0,414.8 762.0,413.0 763.0,414.4 764.0,412.3 766.3,410.9 772.6,406.9 774.4,405.9 776.4,408.1 782.7,406.1 784.8,406.8 793.2,401.9 795.8,406.2 796.4,406.6 796.8,409.9 797.8,406.4 801.7,404.1 803.8,406.6 808.0,402.9 815.4,400.4 815.9,400.4 816.9,408.4 817.9,398.0 818.6,396.6 820.7,399.1 830.2,394.6 839.7,387.6 846.1,385.4 847.0,385.4 848.0,388.9 849.0,384.3 851.8,382.2 853.0,390.3 854.5,393.4 858.3,390.3 859.8,389.6 861.3,394.9 867.2,389.8 869.7,393.4 873.1,392.1 875.6,395.6 879.9,391.3 880.0,391.8 881.0,395.4 882.0,390.4 886.2,387.1 894.7,378.6 902.1,374.8 904.2,376.6 908.4,372.8 911.6,368.1 915.8,364.3 919.0,356.9 923.2,351.2 924.7,338.6 926.4,336.8 928.9,336.4 929.0,336.7 930.0,339.4 931.0,331.2 931.6,329.1 936.9,324.3 942.2,322.1 945.0,318.8 946.0,319.9 946.4,316.3 947.0,315.8 950.5,309.8 951.3,307.9 951.5,311.4 952.5,307.0 955.9,302.2 959.1,300.9 963.3,294.1 967.6,289.9" fill="none" stroke="#9a9a9a" stroke-width="1.2" stroke-linejoin="round"/><polyline points="19.4,605.0 29.5,600.2 39.3,594.3 47.1,590.4 54.0,588.8 61.8,590.8 65.7,593.3 70.6,594.3 74.5,592.0 78.4,589.4 84.3,587.8 86.2,588.8 89.8,587.4 91.7,592.3 96.0,592.7 101.9,590.8 107.8,589.4 111.7,588.4 114.6,592.7 118.5,590.8 123.4,589.8 127.3,593.9 130.2,592.7 135.1,588.8 143.9,586.1 145.3,588.8 153.7,587.8 154.3,591.9 162.5,588.0 171.3,585.9 172.3,588.4 176.2,591.9 181.1,588.8 183.0,590.8 189.9,588.8 197.7,585.5 205.5,583.3 209.4,585.6 215.6,577.8 218.6,576.2 219.6,578.7 229.3,573.8 236.2,568.4 241.1,567.6 247.9,560.5 257.7,552.7 261.0,554.9 265.5,550.8 272.3,548.8 284.1,543.0 287.0,543.5 290.9,539.2 296.8,536.7 297.8,532.4 304.6,525.0 306.5,526.9 315.3,522.6 316.9,526.5 319.3,523.4 333.9,518.1 336.9,521.4 340.4,520.1 344.7,515.2 350.1,514.6 351.5,510.9 357.4,508.9 359.3,506.8 366.2,502.5 369.1,501.9 370.1,505.0 372.0,501.5 374.0,503.9 385.7,499.6 393.5,494.7 395.7,498.1 409.6,493.3 412.5,495.3 415.4,499.8 421.3,497.2 428.1,490.8 429.7,498.2 436.9,495.3 441.8,491.8 443.2,497.6 448.7,495.3 457.4,489.8 462.3,488.8 466.2,486.5 476.0,483.5 479.9,482.2 483.8,483.9 487.8,478.7 491.7,477.7 493.2,480.6 495.6,480.2 497.5,482.6 501.4,479.2 511.2,476.3 515.1,481.0 522.9,478.3 534.3,476.1 535.1,467.9 539.0,461.4 540.9,465.0 550.3,462.0 558.1,458.5 564.4,456.6 568.9,460.1 575.7,457.1 583.5,456.2 587.4,454.7 592.7,457.2 600.5,455.2 606.4,449.9 613.2,446.0 621.1,444.5 625.0,444.5 636.7,439.8 646.5,438.2 655.3,436.2 658.2,438.2 666.0,439.2 668.9,442.5 672.9,442.1 674.8,439.2 679.7,437.8 681.3,434.7 683.6,436.2 689.5,435.7 695.3,437.2 705.1,433.9 712.9,430.8 714.9,432.3 718.8,428.8 731.5,423.5 740.3,418.3 747.2,415.7 748.5,417.7 756.0,414.3 766.3,410.5 772.6,406.5 774.4,405.5 776.4,407.6 782.7,405.7 784.8,406.3 793.2,401.5 796.4,406.1 801.7,403.6 803.8,406.1 808.0,402.5 815.4,400.0 818.6,396.2 820.7,398.7 830.2,394.1 839.7,387.1 846.1,385.0 851.8,381.8 853.0,389.9 854.5,393.0 858.3,389.9 859.8,389.2 861.3,394.5 867.2,389.4 869.7,393.0 873.1,391.6 875.6,395.1 879.9,390.9 886.2,386.7 894.7,378.2 902.1,374.4 904.2,376.1 908.4,372.3 911.6,367.7 915.8,363.9 919.0,356.5 923.2,350.8 924.7,338.1 926.4,336.4 928.9,336.0 931.6,328.6 936.9,323.9 942.2,321.6 946.4,315.9 951.3,307.5 955.9,301.8 959.1,300.5 963.3,293.7 967.6,289.5" fill="none" stroke="#fbf00c" stroke-width="1.6" stroke-linejoin="round" stroke-linecap="round"/><circle cx="766.4" cy="410.5" r="3.6" fill="#fff200"/><rect x="10" y="613.7" width="968.4" height="1.2" fill="#c4c4c4"/><rect x="976.9" y="281" width="1.5" height="333.5" fill="#b4b4b4"/><rect x="19" y="614.5" width="1" height="2.8" fill="#c4c4c4"/><rect x="68" y="614.5" width="1" height="2.8" fill="#c4c4c4"/><rect x="118" y="614.5" width="1" height="2.8" fill="#c4c4c4"/><rect x="168" y="614.5" width="1" height="2.8" fill="#c4c4c4"/><rect x="218" y="614.5" width="1" height="2.8" fill="#c4c4c4"/><rect x="267" y="614.5" width="1" height="2.8" fill="#c4c4c4"/><rect x="317" y="614.5" width="1" height="2.8" fill="#c4c4c4"/><rect x="366" y="614.5" width="1" height="2.8" fill="#c4c4c4"/><rect x="416" y="614.5" width="1" height="2.8" fill="#c4c4c4"/><rect x="466" y="614.5" width="1" height="2.8" fill="#c4c4c4"/><rect x="516" y="614.5" width="1" height="2.8" fill="#c4c4c4"/><rect x="565" y="614.5" width="1" height="2.8" fill="#c4c4c4"/><rect x="615" y="614.5" width="1" height="2.8" fill="#c4c4c4"/><rect x="664" y="614.5" width="1" height="2.8" fill="#c4c4c4"/><rect x="714" y="614.5" width="1" height="2.8" fill="#c4c4c4"/><rect x="764" y="614.5" width="1" height="2.8" fill="#c4c4c4"/><rect x="814" y="614.5" width="1" height="2.8" fill="#c4c4c4"/><rect x="863" y="614.5" width="1" height="2.8" fill="#c4c4c4"/><rect x="913" y="614.5" width="1" height="2.8" fill="#c4c4c4"/><rect x="962" y="614.5" width="1" height="2.8" fill="#c4c4c4"/><rect x="978.4" y="301" width="2.4" height="1" fill="#b4b4b4"/><rect x="978.4" y="344" width="2.4" height="1" fill="#b4b4b4"/><rect x="978.4" y="366" width="2.4" height="1" fill="#b4b4b4"/><rect x="978.4" y="388" width="2.4" height="1" fill="#b4b4b4"/><rect x="978.4" y="410" width="2.4" height="1" fill="#b4b4b4"/><rect x="978.4" y="431" width="2.4" height="1" fill="#b4b4b4"/><rect x="978.4" y="453" width="2.4" height="1" fill="#b4b4b4"/><rect x="978.4" y="475" width="2.4" height="1" fill="#b4b4b4"/><rect x="978.4" y="496" width="2.4" height="1" fill="#b4b4b4"/><rect x="978.4" y="518" width="2.4" height="1" fill="#b4b4b4"/><rect x="978.4" y="539" width="2.4" height="1" fill="#b4b4b4"/><rect x="978.4" y="562" width="2.4" height="1" fill="#b4b4b4"/><rect x="978.4" y="605" width="2.4" height="1" fill="#b4b4b4"/><rect x="19.8" y="582" width="53.2" height="22.8" fill="rgba(52,52,52,0.52)"/><rect x="20.8" y="587" width="16.2" height="2" fill="#fbf315"/><rect x="20.8" y="598" width="16.2" height="1.8" fill="#949494"/></svg>
<span class="t" style="left:983.40px;top:600px;font-size:9.5px;line-height:12.216px;color:#c8c8c8;transform:scaleX(1.0072);">10000</span>
<span class="t" style="left:983.40px;top:578px;font-size:9.5px;line-height:12.216px;color:#c8c8c8;transform:scaleX(1.0072);">15000</span>
<span class="t" style="left:983.40px;top:557px;font-size:9.5px;line-height:12.216px;color:#c8c8c8;transform:scaleX(1.0072);">20000</span>
<span class="t" style="left:983.40px;top:534px;font-size:9.5px;line-height:12.216px;color:#c8c8c8;transform:scaleX(1.0072);">25000</span>
<span class="t" style="left:983.40px;top:513px;font-size:9.5px;line-height:12.216px;color:#c8c8c8;transform:scaleX(1.0072);">30000</span>
<span class="t" style="left:983.40px;top:491px;font-size:9.5px;line-height:12.216px;color:#c8c8c8;transform:scaleX(1.0072);">35000</span>
<span class="t" style="left:983.40px;top:470px;font-size:9.5px;line-height:12.216px;color:#c8c8c8;transform:scaleX(1.0072);">40000</span>
<span class="t" style="left:983.40px;top:448px;font-size:9.5px;line-height:12.216px;color:#c8c8c8;transform:scaleX(1.0072);">45000</span>
<span class="t" style="left:983.40px;top:426px;font-size:9.5px;line-height:12.216px;color:#c8c8c8;transform:scaleX(1.0072);">50000</span>
<span class="t" style="left:983.40px;top:405px;font-size:9.5px;line-height:12.216px;color:#c8c8c8;transform:scaleX(1.0072);">55000</span>
<span class="t" style="left:983.40px;top:383px;font-size:9.5px;line-height:12.216px;color:#c8c8c8;transform:scaleX(1.0072);">60000</span>
<span class="t" style="left:983.40px;top:361px;font-size:9.5px;line-height:12.216px;color:#c8c8c8;transform:scaleX(1.0072);">65000</span>
<span class="t" style="left:983.40px;top:339px;font-size:9.5px;line-height:12.216px;color:#c8c8c8;transform:scaleX(1.0072);">70000</span>
<span class="t" style="left:983.40px;top:317px;font-size:9.5px;line-height:12.216px;color:#c8c8c8;transform:scaleX(1.0072);">75000</span>
<span class="t" style="left:983.40px;top:296px;font-size:9.5px;line-height:12.216px;color:#c8c8c8;transform:scaleX(1.0072);">80000</span>
<span class="t" style="left:16.80px;top:619px;font-size:9.5px;line-height:12.216px;color:#c8c8c8;transform:scaleX(1.0242);">0</span>
<span class="t" style="left:63.10px;top:619px;font-size:9.5px;line-height:12.216px;color:#c8c8c8;transform:scaleX(1.0242);">50</span>
<span class="t" style="left:110.40px;top:619px;font-size:9.5px;line-height:12.216px;color:#c8c8c8;transform:scaleX(1.0211);">100</span>
<span class="t" style="left:160.40px;top:619px;font-size:9.5px;line-height:12.216px;color:#c8c8c8;transform:scaleX(1.0211);">150</span>
<span class="t" style="left:210.40px;top:619px;font-size:9.5px;line-height:12.216px;color:#c8c8c8;transform:scaleX(1.0211);">200</span>
<span class="t" style="left:259.40px;top:619px;font-size:9.5px;line-height:12.216px;color:#c8c8c8;transform:scaleX(1.0211);">250</span>
<span class="t" style="left:309.40px;top:619px;font-size:9.5px;line-height:12.216px;color:#c8c8c8;transform:scaleX(1.0211);">300</span>
<span class="t" style="left:358.40px;top:619px;font-size:9.5px;line-height:12.216px;color:#c8c8c8;transform:scaleX(1.0211);">350</span>
<span class="t" style="left:408.40px;top:619px;font-size:9.5px;line-height:12.216px;color:#c8c8c8;transform:scaleX(1.0211);">400</span>
<span class="t" style="left:458.40px;top:619px;font-size:9.5px;line-height:12.216px;color:#c8c8c8;transform:scaleX(1.0211);">450</span>
<span class="t" style="left:508.40px;top:619px;font-size:9.5px;line-height:12.216px;color:#c8c8c8;transform:scaleX(1.0211);">500</span>
<span class="t" style="left:557.40px;top:619px;font-size:9.5px;line-height:12.216px;color:#c8c8c8;transform:scaleX(1.0211);">550</span>
<span class="t" style="left:607.40px;top:619px;font-size:9.5px;line-height:12.216px;color:#c8c8c8;transform:scaleX(1.0211);">600</span>
<span class="t" style="left:656.40px;top:619px;font-size:9.5px;line-height:12.216px;color:#c8c8c8;transform:scaleX(1.0211);">650</span>
<span class="t" style="left:706.40px;top:619px;font-size:9.5px;line-height:12.216px;color:#c8c8c8;transform:scaleX(1.0211);">700</span>
<span class="t" style="left:756.40px;top:619px;font-size:9.5px;line-height:12.216px;color:#c8c8c8;transform:scaleX(1.0211);">750</span>
<span class="t" style="left:806.40px;top:619px;font-size:9.5px;line-height:12.216px;color:#c8c8c8;transform:scaleX(1.0211);">800</span>
<span class="t" style="left:855.40px;top:619px;font-size:9.5px;line-height:12.216px;color:#c8c8c8;transform:scaleX(1.0211);">850</span>
<span class="t" style="left:905.40px;top:619px;font-size:9.5px;line-height:12.216px;color:#c8c8c8;transform:scaleX(1.0211);">900</span>
<span class="t" style="left:954.40px;top:619px;font-size:9.5px;line-height:12.216px;color:#c8c8c8;transform:scaleX(1.0211);">950</span>
<span class="t" style="left:42.50px;top:582px;font-size:10px;line-height:13.870px;color:#fff;transform:scaleX(0.9883);">Saldo</span>
<span class="t" style="left:42.50px;top:594px;font-size:10px;line-height:13.870px;color:#fff;transform:scaleX(0.9727);">Capital</span>
<div class="b" style="left:530.3px;top:325.3px;width:231.8px;height:80.2px;background:rgba(34,34,34,0.95);border-radius:2.5px"></div>
<span class="t" style="left:535.80px;top:331px;font-size:10px;line-height:13.870px;color:#d6d6d6;transform:scaleX(0.9409);">Data</span>
<span class="t" style="left:647.80px;top:331px;font-size:10px;line-height:13.870px;color:#d6d6d6;transform:scaleX(0.9802);">16/09/2025 13:39:00.000</span>
<span class="t" style="left:535.80px;top:342px;font-size:10px;line-height:13.870px;color:#d6d6d6;transform:scaleX(0.9805);">Saldo</span>
<span class="t" style="left:637.00px;top:342px;font-size:10px;line-height:13.870px;color:#d6d6d6;transform:scaleX(0.9730);">$</span>
<span class="t" style="left:712.80px;top:342px;font-size:10px;line-height:13.870px;color:#d6d6d6;transform:scaleX(0.9888);">54 680.32</span>
<span class="t" style="left:535.80px;top:354px;font-size:10px;line-height:13.870px;color:#d6d6d6;transform:scaleX(0.9893);">Decréscimo do saldo</span>
<span class="t" style="left:637.00px;top:354px;font-size:10px;line-height:13.870px;color:#d6d6d6;transform:scaleX(0.9730);">$</span>
<span class="t" style="left:712.50px;top:354px;font-size:10px;line-height:13.870px;color:#d6d6d6;transform:scaleX(0.9599);">(0%)  0.00</span>
<span class="t" style="left:535.80px;top:366px;font-size:10px;line-height:13.870px;color:#d6d6d6;transform:scaleX(0.9807);">Decréscimo do capital</span>
<span class="t" style="left:637.00px;top:366px;font-size:10px;line-height:13.870px;color:#d6d6d6;transform:scaleX(0.9730);">$</span>
<span class="t" style="left:687.60px;top:366px;font-size:10px;line-height:13.870px;color:#d6d6d6;transform:scaleX(0.9830);">(0.21%)  113.56</span>
<span class="t" style="left:535.80px;top:377px;font-size:10px;line-height:13.870px;color:#d6d6d6;transform:scaleX(0.9878);">Capital mín.</span>
<span class="t" style="left:637.00px;top:377px;font-size:10px;line-height:13.870px;color:#d6d6d6;transform:scaleX(0.9730);">$</span>
<span class="t" style="left:712.80px;top:377px;font-size:10px;line-height:13.870px;color:#d6d6d6;transform:scaleX(0.9888);">54 460.32</span>
<span class="t" style="left:535.80px;top:389px;font-size:10px;line-height:13.870px;color:#d6d6d6;transform:scaleX(0.9820);">Capital máx.</span>
<span class="t" style="left:637.00px;top:389px;font-size:10px;line-height:13.870px;color:#d6d6d6;transform:scaleX(0.9730);">$</span>
<span class="t" style="left:712.80px;top:389px;font-size:10px;line-height:13.870px;color:#d6d6d6;transform:scaleX(0.9888);">54 573.88</span>
<div class="b" style="left:4.6px;top:651.7px;width:4.4px;height:4.4px;background:#0b8a14;border-radius:50%"></div>
<span class="t" style="left:14.00px;top:648px;font-size:10px;line-height:13.870px;color:#fff;transform:scaleX(0.9901);">Sessões de negociação: Frankfurt, Londres, Nova Iorque</span>
<span class="t" style="left:738.20px;top:648px;font-size:10px;line-height:13.870px;color:#fff;transform:scaleX(0.9775);">Hora atual:</span>
<span class="t" style="left:791.30px;top:648px;font-size:10px;line-height:13.870px;color:#fff;transform:scaleX(0.9901);">04/03/2026 11:08:20</span>
<span class="t" style="left:889.50px;top:648px;font-size:10px;line-height:13.870px;color:#fff;transform:scaleX(0.9677);">UTC-3</span>
<svg class="b" style="left:926.5px;top:650.5px" width="6" height="5"><path d="M0.3,0.5 L4.9,0.5 L2.6,4.3Z" fill="#777"/></svg>
<div class="b" style="left:941px;top:649px;width:1.1px;height:9.2px;background:#e8e8e8;"></div>
<span class="t" style="left:948.20px;top:648px;font-size:10px;line-height:13.870px;color:#d0d0d0;font-weight:bold;transform:scaleX(0.9487);">110 ms / 110 ms</span>
</body></html>
